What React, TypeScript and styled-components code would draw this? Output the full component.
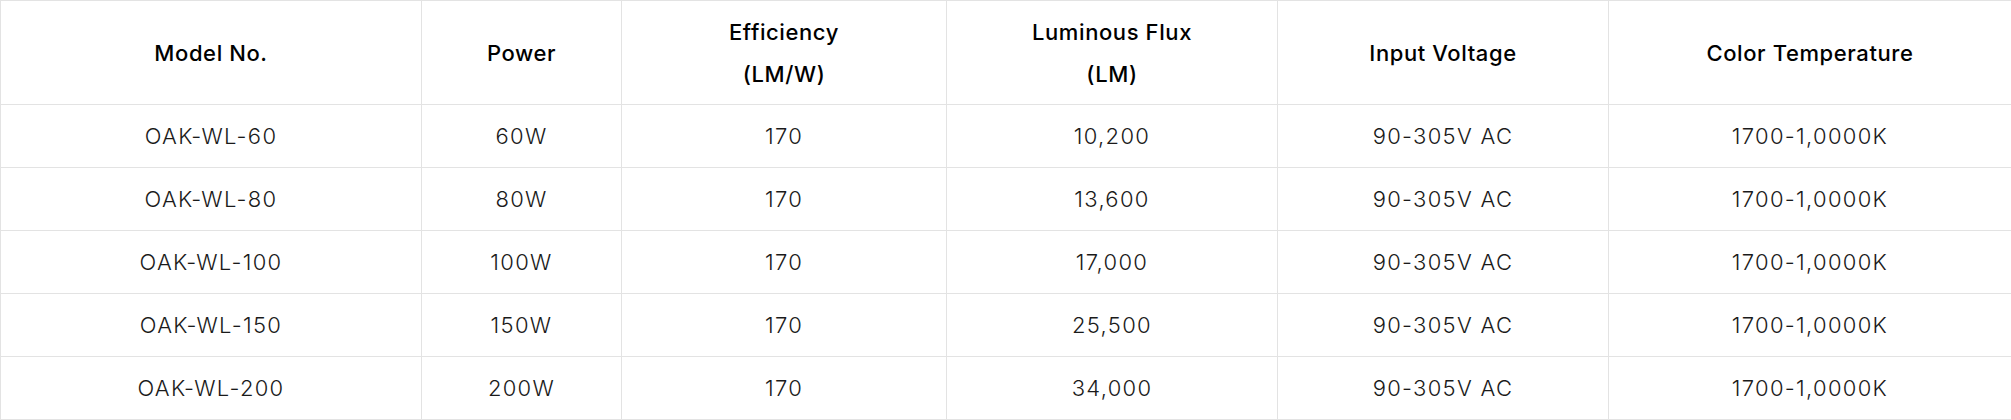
import React from "react";
import styled, { createGlobalStyle } from "styled-components";

type Spec = {
  model: string;
  power: string;
  efficiency: string;
  flux: string;
  voltage: string;
  temperature: string;
};

const specs: Spec[] = [
  { model: "OAK-WL-60", power: "60W", efficiency: "170", flux: "10,200", voltage: "90-305V AC", temperature: "1700-1,0000K" },
  { model: "OAK-WL-80", power: "80W", efficiency: "170", flux: "13,600", voltage: "90-305V AC", temperature: "1700-1,0000K" },
  { model: "OAK-WL-100", power: "100W", efficiency: "170", flux: "17,000", voltage: "90-305V AC", temperature: "1700-1,0000K" },
  { model: "OAK-WL-150", power: "150W", efficiency: "170", flux: "25,500", voltage: "90-305V AC", temperature: "1700-1,0000K" },
  { model: "OAK-WL-200", power: "200W", efficiency: "170", flux: "34,000", voltage: "90-305V AC", temperature: "1700-1,0000K" },
];

// column widths taken from the screenshot
const columns = [421, 200, 325, 331, 331, 403];

const App: React.FC = () => {
  return (
    <>
      <GlobalStyle />
      <SpecTable>
        <colgroup>
          {columns.map((w, i) => (
            <col key={i} style={{ width: w }} />
          ))}
        </colgroup>
        <thead>
          <HeadRow>
            <HeadCell>Model No.</HeadCell>
            <HeadCell>Power</HeadCell>
            <HeadCell>
              Efficiency
              <br />
              (LM/W)
            </HeadCell>
            <HeadCell>
              Luminous Flux
              <br />
              (LM)
            </HeadCell>
            <HeadCell>Input Voltage</HeadCell>
            <HeadCell>Color Temperature</HeadCell>
          </HeadRow>
        </thead>
        <tbody>
          {specs.map((s) => (
            <BodyRow key={s.model}>
              <Cell>{s.model}</Cell>
              <Cell>{s.power}</Cell>
              <Cell>{s.efficiency}</Cell>
              <Cell>{s.flux}</Cell>
              <Cell>{s.voltage}</Cell>
              <Cell>{s.temperature}</Cell>
            </BodyRow>
          ))}
        </tbody>
      </SpecTable>
    </>
  );
};

export default App;

// Styled components
const GlobalStyle = createGlobalStyle`
  html, body {
    margin: 0;
    padding: 0;
    background: #fff;
  }
  body {
    font-family: Inter, "Open Sans", sans-serif;
  }
`;

const SpecTable = styled.table`
  width: 2011px;
  table-layout: fixed;
  border-collapse: collapse;
  color: #111;
`;

const HeadRow = styled.tr`
  height: 104px;
`;

const BodyRow = styled.tr`
  height: 63px;
`;

const HeadCell = styled.th`
  border: 1px solid #e3e3e3;
  padding: 0 10px;
  text-align: center;
  vertical-align: middle;
  font-size: 22px;
  font-weight: 500;
  line-height: 42px;
  letter-spacing: 0.6px;
  color: #000;
`;

const Cell = styled.td`
  border: 1px solid #e3e3e3;
  padding: 0 10px;
  text-align: center;
  vertical-align: middle;
  font-size: 22px;
  font-weight: 300;
  letter-spacing: 1.3px;
  color: #1a1a1a;
`;
